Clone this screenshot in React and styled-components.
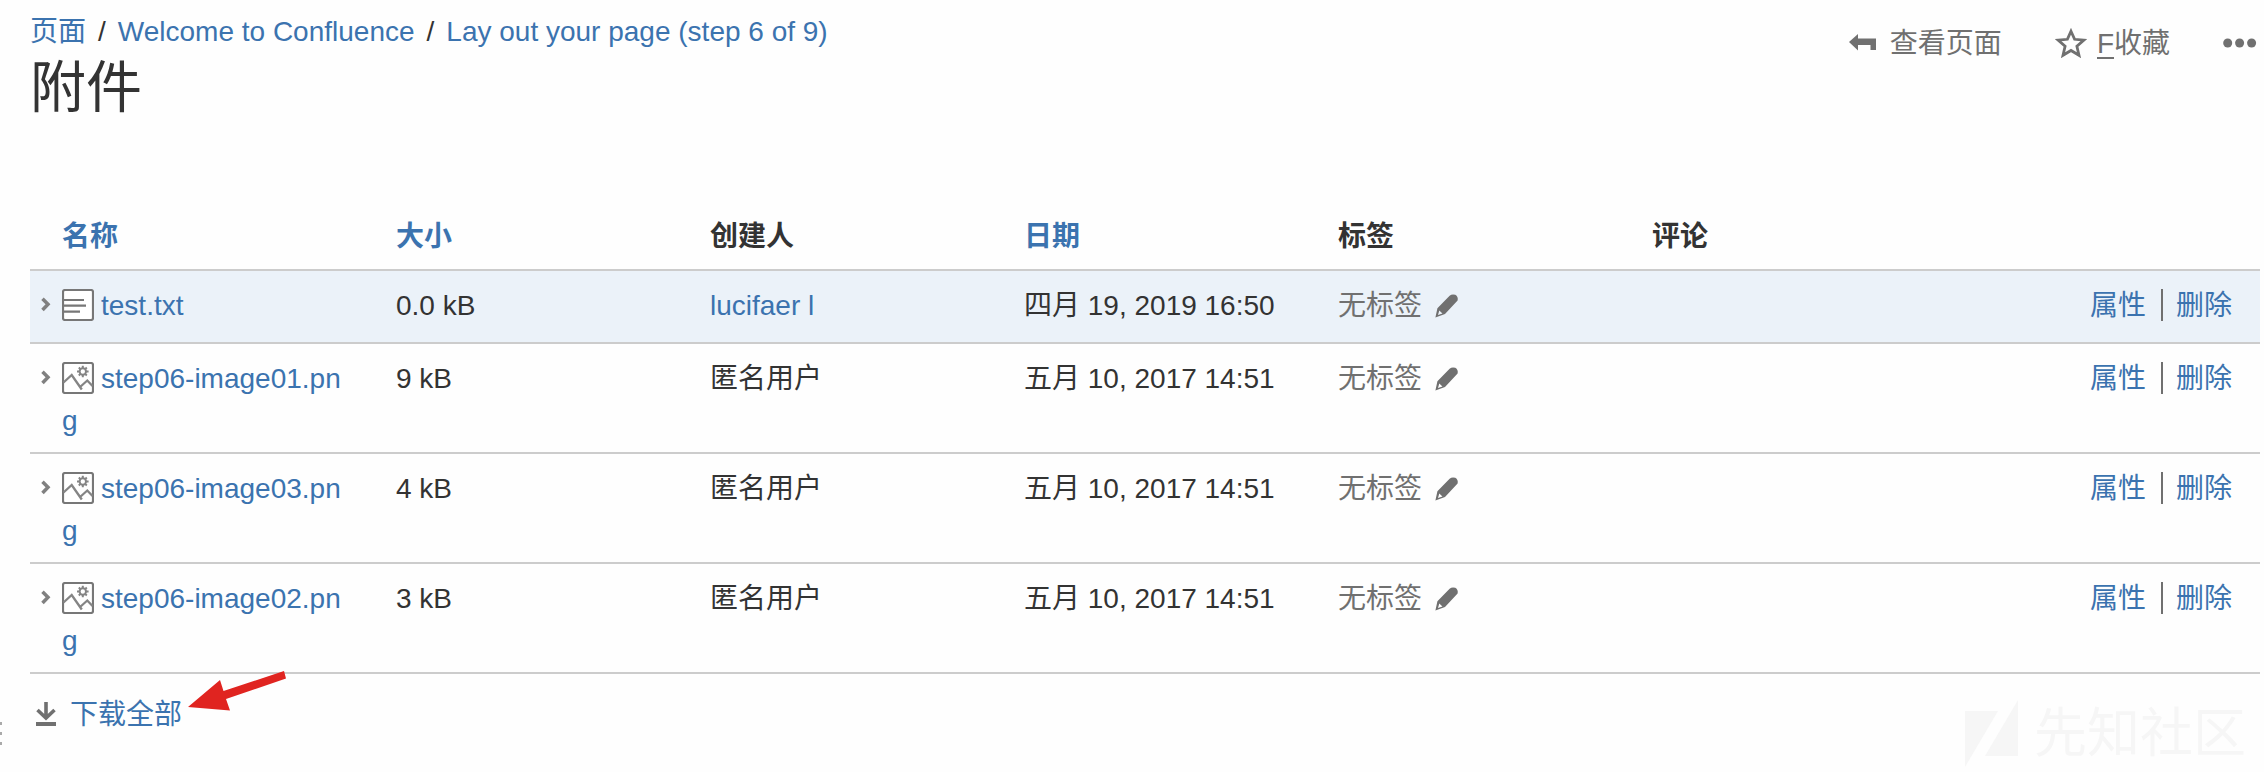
import React from "react";
import styled, { createGlobalStyle } from "styled-components";

const GlobalStyle = createGlobalStyle`
  * { box-sizing: border-box; }
  html, body { margin: 0; padding: 0; background: #fefefe; }
  body {
    font-family: "Liberation Sans", "Noto Sans CJK SC", sans-serif;
    font-size: 28px;
    line-height: 42px;
    color: #333;
    overflow: hidden;
  }
`;

const Page = styled.main`
  position: relative;
  width: 2264px;
  height: 772px;
  overflow: hidden;
  padding: 11px 4px 0 30px;
`;

const Header = styled.header`
  display: flex;
  justify-content: space-between;
  height: 189px;
`;

const Link = styled.a`
  color: #3b73af;
  text-decoration: none;
`;

const Breadcrumbs = styled.nav`
  display: flex;
  gap: 12px;
  white-space: nowrap;
`;

const Title = styled.h1`
  margin: 0;
  font-size: 56px;
  line-height: 70px;
  font-weight: 400;
`;

const Tools = styled.div`
  display: flex;
  align-items: flex-start;
  padding-top: 12px;
  color: #707070;
  white-space: nowrap;
`;

const Tool = styled.div`
  display: flex;
  align-items: center;
  height: 42px;
  gap: ${(p) => p.$gap || 0}px;
  margin-right: ${(p) => p.$after || 0}px;
  svg { margin-bottom: 2px; }
`;

const AccessKey = styled.span`
  display: inline-block;
  height: 36px;
  border-bottom: 2px solid #707070;
`;

const Table = styled.div`
  width: 2230px;
`;

const Row = styled.div`
  display: grid;
  grid-template-columns: 32px 334px 314px 314px 314px 314px 1fr;
  align-items: start;
  height: ${(p) => p.$height}px;
  padding-top: 14px;
  border-bottom: 2px solid #ccc;
  background: ${(p) => (p.$active ? "#ebf2f9" : "transparent")};
`;

const HeadRow = styled(Row)`
  font-weight: 700;
  padding-top: 16px;
`;

const Chevron = styled.span`
  display: flex;
  padding: 12px 0 0 11px;
`;

const NameCell = styled.div`
  width: 288px;
  word-break: break-all;
  svg {
    vertical-align: top;
    margin: 4px 7px 0 0;
  }
`;

const LabelCell = styled.div`
  display: flex;
  align-items: center;
  gap: 12px;
  color: #707070;
  svg { margin-bottom: 2px; }
`;

const Actions = styled.div`
  display: flex;
  justify-content: flex-end;
  align-items: center;
  padding-right: 28px;
`;

const Divider = styled.span`
  width: 2px;
  height: 32px;
  margin: -2px 13px 0 15px;
  background: #707070;
`;

const Download = styled.div`
  display: flex;
  align-items: center;
  gap: 13px;
  padding: 20px 0 0 5px;
  svg { margin-bottom: 2px; }
`;

const RedArrow = styled.svg`
  position: absolute;
  left: 184px;
  top: 666px;
`;

const Grip = styled.svg`
  position: absolute;
  left: 0;
  top: 720px;
`;

const Watermark = styled.div`
  position: absolute;
  left: 1965px;
  top: 700px;
  display: flex;
  align-items: center;
  gap: 15px;
  height: 68px;
  font-size: 53px;
  line-height: 68px;
  color: #f6f6f6;
  white-space: nowrap;
`;

const TextFileIcon = () => (
  <svg width="32" height="32" viewBox="0 0 32 32" fill="none">
    <rect x="1" y="1" width="30" height="30" rx="2" fill="#fff" stroke="#777" strokeWidth="2.2" />
    <path d="M2 11h20M2 16.7h22M2 22.7h16" stroke="#777" strokeWidth="2.2" />
  </svg>
);

const ImageFileIcon = () => (
  <svg width="32" height="32" viewBox="0 0 32 32" fill="none">
    <rect x="1" y="1" width="30" height="30" rx="2" fill="#fff" stroke="#777" strokeWidth="2.2" />
    <path d="M1.5 20.5 9.7 13 19.8 27.5M17.5 25.5 25.3 18.5l5.2 5.5" stroke="#858585" strokeWidth="2.3" />
    <circle cx="20.8" cy="9.5" r="3.2" stroke="#858585" strokeWidth="2" />
    <path d="M20.8 3.7v2.4M20.8 12.9v2.4M15 9.5h2.4M24.2 9.5h2.4M16.8 5.5l1.6 1.6M23.2 11.9l1.6 1.6M16.8 13.5l1.6-1.6M23.2 7.1l1.6-1.6" stroke="#858585" strokeWidth="2" />
  </svg>
);

const ChevronIcon = () => (
  <svg width="10" height="15" viewBox="0 0 10 15" fill="none">
    <path d="M1.5 1.7 7 7.3 1.5 13" stroke="#808080" strokeWidth="3.5" />
  </svg>
);

const PencilIcon = () => (
  <svg width="26" height="26" viewBox="0 0 26 26" fill="#707070">
    <path d="M3.4 16.2 15.6 3.8Q18 1.6 21.3 2.8 24.5 4.8 23.6 8.6L11 22 1.4 25.4ZM5.3 18.4 4 22.9l4.5-1.5Z" fillRule="evenodd" />
  </svg>
);

const files = [
  { name: "test.txt", size: "0.0 kB", creator: "lucifaer l", date: "四月 19, 2019 16:50", text: true },
  { name: "step06-image01.png", size: "9 kB", creator: "匿名用户", date: "五月 10, 2017 14:51" },
  { name: "step06-image03.png", size: "4 kB", creator: "匿名用户", date: "五月 10, 2017 14:51" },
  { name: "step06-image02.png", size: "3 kB", creator: "匿名用户", date: "五月 10, 2017 14:51" },
];

const FileRow = ({ file }) => (
  <Row $height={file.text ? 73 : 110} $active={file.text}>
    <Chevron><ChevronIcon /></Chevron>
    <NameCell>
      {file.text ? <TextFileIcon /> : <ImageFileIcon />}
      <Link>{file.name}</Link>
    </NameCell>
    <div>{file.size}</div>
    <div>{file.text ? <Link>{file.creator}</Link> : file.creator}</div>
    <div>{file.date}</div>
    <LabelCell>无标签<PencilIcon /></LabelCell>
    <Actions>
      <Link>属性</Link>
      <Divider />
      <Link>删除</Link>
    </Actions>
  </Row>
);

export default function App() {
  return (
    <Page>
      <GlobalStyle />
      <Header>
        <div>
          <Breadcrumbs>
            <Link>页面</Link>
            <span>/</span>
            <Link>Welcome to Confluence</Link>
            <span>/</span>
            <Link>Lay out your page (step 6 of 9)</Link>
          </Breadcrumbs>
          <Title>附件</Title>
        </div>
        <Tools>
          <Tool $gap={13} $after={53}>
            <svg width="28" height="18" viewBox="0 0 28 18" fill="#707070">
              <path d="M0 8 9 0v4.5h18V16h-5.5v-5H9v5.5Z" />
            </svg>
            <span>查看页面</span>
          </Tool>
          <Tool $gap={10} $after={53}>
            <svg width="32" height="32" viewBox="0 0 32 32" fill="none">
              <path d="m16 4.2 3.6 8.1 9.3.8-7 6.1 2.1 9.1-8-4.8-8 4.8 2.1-9.1-7-6.1 9.3-.8Z" stroke="#707070" strokeWidth="2.8" />
            </svg>
            <span><AccessKey>F</AccessKey>收藏</span>
          </Tool>
          <Tool>
            <svg width="37" height="10" viewBox="0 0 37 10" fill="#707070">
              <circle cx="4.7" cy="5" r="4.5" />
              <circle cx="16.6" cy="5" r="4.5" />
              <circle cx="28.6" cy="5" r="4.5" />
            </svg>
          </Tool>
        </Tools>
      </Header>
      <Table>
        <HeadRow $height={71}>
          <span />
          <Link>名称</Link>
          <Link>大小</Link>
          <span>创建人</span>
          <Link>日期</Link>
          <span>标签</span>
          <span>评论</span>
        </HeadRow>
        {files.map((file) => <FileRow key={file.name} file={file} />)}
      </Table>
      <Download>
        <svg width="22" height="26" viewBox="0 0 22 26" fill="none" stroke="#707070">
          <path d="M11 1v15M2.5 9 11 17l8.5-8" strokeWidth="3.6" />
          <path d="M1 23h20" strokeWidth="4" />
        </svg>
        <Link>下载全部</Link>
      </Download>
      <RedArrow width="106" height="48" viewBox="0 0 106 48">
        <path d="M4 41 36 14l3.5 11L100 5l2 7.5L42 33l4 11.5Z" fill="#e02420" />
      </RedArrow>
      <Grip width="3" height="28" viewBox="0 0 3 28" fill="#aaa">
        <path d="M0 2h2v3H0zM0 12h2v3H0zM0 22h2v3H0z" />
      </Grip>
      <Watermark>
        <svg width="54" height="68" viewBox="0 0 54 68" fill="#f6f6f6">
          <path d="M0 11h33L0 67ZM53 0v56H20Z" />
        </svg>
        <span>先知社区</span>
      </Watermark>
    </Page>
  );
}
